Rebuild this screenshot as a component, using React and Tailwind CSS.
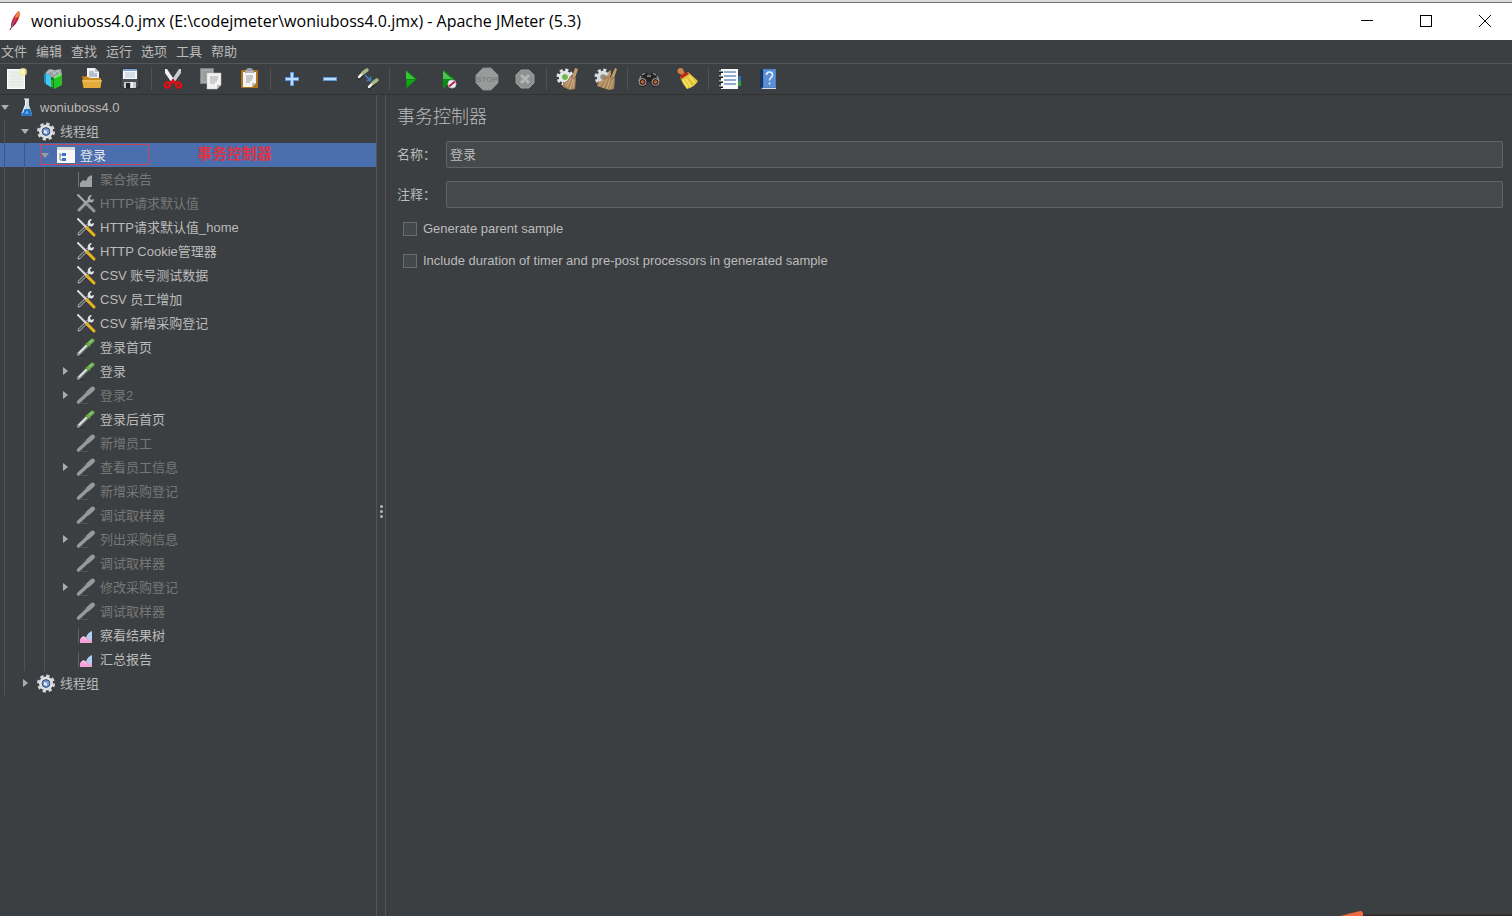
import React, { useState } from 'react';

// Toolbar icons, 24x24
const toolbarIcons = {
  new: (
    <>
      <rect x="3.5" y="2.5" width="17" height="19" fill="#eef0ee" stroke="#fdfdfd" />
      <path d="M6 6h10M6 9h12M6 12h12M6 15h12M6 18h12" stroke="#e0e3e0" />
      <circle cx="19" cy="5" r="4" fill="#f3efa0" opacity="0.8" />
      <circle cx="19" cy="5" r="2" fill="#fbf7b4" />
    </>
  ),
  templates: (
    <>
      <path d="M3 6l4-4 6 1 6-1 1 6-7 4z" fill="#9aa3a6" />
      <path d="M5 6l5-3 2 4M12 7l4-4 2 4" stroke="#c9d0d2" fill="none" />
      <path d="M2 7l3-1v12l-3-3z" fill="#1d8fc4" />
      <path d="M4 6l6 4v11l-6-4z" fill="#49c8ee" />
      <path d="M9 10l4 2v10l-4-1z" fill="#0a7d16" />
      <path d="M12 11l8-3v10l-8 4z" fill="#25c228" />
      <path d="M13 9l5-2 2 1-8 4z" fill="#7bec58" />
      <path d="M10 13v7" stroke="#4fe04d" />
    </>
  ),
  open: (
    <>
      <path d="M2 9h6v12H3z" fill="#a86d12" />
      <path d="M7 1h8l4 4v9H7z" fill="#eef1f6" />
      <path d="M15 1v4h4" fill="#b8c1cf" />
      <path d="M9 5h5M9 7h8M9 9h8" stroke="#7f8da6" />
      <path d="M3 12c0-1 1-2 2-2h3l2 1h11v8c0 2-1 2-2 2H4z" fill="#c98a22" />
      <path d="M2 13h20l-2 8H4z" fill="#e5ac3c" />
      <path d="M3 14h18" stroke="#f3cb73" />
    </>
  ),
  save: (
    <>
      <path d="M3 2h18v19H5l-2-2z" fill="#4a4e53" stroke="#2b2d30" />
      <rect x="5" y="2" width="14" height="10" fill="#f3f6fa" />
      <path d="M5 3h14" stroke="#7ba3d6" strokeWidth="2" />
      <path d="M7 6h10M7 8h10M7 10h10" stroke="#b8c3d3" />
      <rect x="6" y="15" width="12" height="6" fill="#c7cbd0" />
      <rect x="8" y="16" width="4" height="5" fill="#24272a" />
      <path d="M14 15v6" stroke="#eff1f2" strokeWidth="2" />
    </>
  ),
  cut: (
    <>
      <path d="M4 2l2 0 8 12-3 2L4 6z" fill="#f0f1f2" />
      <path d="M20 2l-2 0-8 12 3 2 7-10z" fill="#c9ccd0" />
      <path d="M11 13l3 3M13 13l-3 3" stroke="#dc1015" strokeWidth="3" />
      <ellipse cx="6.5" cy="18" rx="2.2" ry="2.800" fill="none" stroke="#dc1015" strokeWidth="2.600" transform="rotate(35 6.5 18)" />
      <ellipse cx="17.5" cy="18" rx="2.2" ry="2.800" fill="none" stroke="#dc1015" strokeWidth="2.600" transform="rotate(-35 17.5 18)" />
    </>
  ),
  copy: (
    <>
      <rect x="1.5" y="1.5" width="13" height="15" fill="#a5a7a6" stroke="#7f8281" />
      <path d="M4 5h9M4 7h9M4 9h9M4 11h9M4 13h9" stroke="#8e9190" />
      <path d="M8 6h14v12l-4 4H8z" fill="#f1f2f0" stroke="#c4c6c3" strokeWidth="0.5" />
      <path d="M11 10h8M11 12h8M11 14h7M11 16h5" stroke="#a7aaa7" />
      <path d="M18 22v-4h4z" fill="#b6b8b5" />
    </>
  ),
  paste: (
    <>
      <rect x="4" y="3" width="17" height="18" rx="1" fill="#b0731e" />
      <path d="M6 5h13v11l-4 4H6z" fill="#f4f4f2" />
      <path d="M8 4c0-2 2-1 2.500-3h4c.5 2 2.500 1 2.500 3v2H8z" fill="#9b9ea0" />
      <path d="M9 5h7" stroke="#d4d6d7" />
      <path d="M9 9h7M9 11h7M9 13h6M9 15h4" stroke="#999d9d" />
      <path d="M15 20v-4h4z" fill="#bdbfbc" />
    </>
  ),
  expand: (
    <>
      <path d="M12 5v14M5 12h14" stroke="#5f97dd" strokeWidth="4" />
      <path d="M12 6v12M6 12h12" stroke="#bbdcff" strokeWidth="2" />
    </>
  ),
  collapse: (
    <>
      <path d="M5 12h14" stroke="#5f97dd" strokeWidth="4" />
      <path d="M6 12h12" stroke="#bbdcff" strokeWidth="2" />
    </>
  ),
  toggle: (
    <>
      <path d="M2 12l9-9M12 22l9-9" stroke="#282b2c" strokeWidth="4" />
      <path d="M3 10l5-5M13 20l5-5" stroke="#ecefe9" strokeWidth="2.500" strokeLinecap="round" />
      <path d="M7 6l4-3M17 16l4-3" stroke="#a3b98a" strokeWidth="3.500" strokeLinecap="round" />
      <path d="M9 8l5 5M14.500 9.500v4h-4" stroke="#477fc6" strokeWidth="1.500" fill="none" />
    </>
  ),
  start: (
    <>
      <path d="M7 3l11 9-11 10z" fill="#0c8a13" />
      <path d="M7 4l9 8H7z" fill="#37c438" />
      <path d="M8 13h8l-8 7z" fill="#12a51b" />
    </>
  ),
  startNoPauses: (
    <>
      <path d="M6 3l12 9-12 10z" fill="#0c8a13" />
      <path d="M6 4l9 8H6z" fill="#4bc34a" />
      <circle cx="15" cy="17" r="4" fill="#eef0f7" stroke="#c3c7d6" />
      <path d="M12 19.500l6-5" stroke="#c0203c" strokeWidth="2" />
    </>
  ),
  stop: (
    <>
      <path d="M8 1h8l7 7v8l-7 7H8l-7-7V8z" fill="#999b9b" stroke="#868888" />
      <text x="12" y="15" textAnchor="middle" className="font-['Liberation_Sans'] text-[8px] font-bold" fill="#7f8181">STOP</text>
    </>
  ),
  shutdown: (
    <>
      <path d="M8 3h8l5 5v8l-5 5H8l-5-5V8z" fill="#8e9090" stroke="#9c9e9e" />
      <path d="M8 8l8 8M16 8l-8 8" stroke="#b5b7b7" strokeWidth="3" />
    </>
  ),
  clear: (
    <>
      <circle cx="9" cy="10" r="7" fill="none" stroke="#e4e7e7" strokeWidth="3" strokeDasharray="3.100 2.400" />
      <circle cx="9" cy="10" r="4.500" fill="#92b980" stroke="#e4e7e7" strokeWidth="3.500" />
      <circle cx="9" cy="10" r="2.700" fill="#6cb848" />
      <path d="M19 1l3 1-3 9-3-1z" fill="#c29c6c" />
      <path d="M14 9l6 2-1 11-5 1-7-3 0-5c4 0 5-2 7-6z" fill="#a9855d" />
      <path d="M15 11l-4 9M17 12l-3 10M13 14l-4 4M18 13l-1 8" stroke="#cdaf85" />
    </>
  ),
  clearAll: (
    <>
      <circle cx="9" cy="10" r="7" fill="none" stroke="#d8dcdc" strokeWidth="3" strokeDasharray="3.100 2.400" />
      <circle cx="9" cy="10" r="4.500" fill="#8c9390" stroke="#d8dcdc" strokeWidth="3.500" />
      <path d="M15 4l2-1-1 7-3-1zM21 1l2 1-3 9-3-1z" fill="#c29c6c" />
      <path d="M10 8l11 3-1 11-5 1-12-4 1-4c4 0 5-3 6-7z" fill="#a9855d" />
      <path d="M10 13l-5 6M13 12l-4 9M16 12l-3 10M19 13l-3 9" stroke="#cdaf85" />
    </>
  ),
  search: (
    <>
      <path d="M4 8l3-3 3 1 2 3 2-3 3-1 3 3 3 8-3 4h-4l-3-5h-2l-3 5H4l-3-4z" fill="#252527" />
      <path d="M5 8l3-2M19 8l-3-2M4 9l-2 5M20 9l2 5M10 9h4" stroke="#92949a" strokeWidth="1.500" />
      <circle cx="5.500" cy="15" r="3.500" fill="#42251c" stroke="#aaa09d" />
      <circle cx="18.500" cy="15" r="3.500" fill="#42251c" stroke="#aaa09d" />
      <circle cx="5.500" cy="15" r="1.700" fill="#bd653e" />
      <circle cx="18.500" cy="15" r="1.700" fill="#bd653e" />
    </>
  ),
  resetSearch: (
    <>
      <path d="M4 4l4-1 3 5-4 2z" fill="#c9722c" />
      <circle cx="5.500" cy="4" r="3" fill="#d08246" />
      <path d="M5 10l8-5 10 9c-3 5-7 7-11 8-3-3-5-7-7-12z" fill="#e2c33a" />
      <path d="M5 9l7-4 2 2-8 5z" fill="#b8251c" />
      <path d="M8 13l5 8M11 12l5 8M14 9l6 7" stroke="#f7e56c" strokeWidth="1.500" />
    </>
  ),
  functions: (
    <>
      <path d="M20 9h3v5h-3z" fill="#2f6fbb" />
      <path d="M20 14h3v5h-3z" fill="#3b9b43" />
      <path d="M3 2h17v20H3z" fill="#fafbfc" />
      <path d="M6 5h12M6 9h12M6 13h12M6 17h12" stroke="#2e5c9d" />
      <path d="M1 5h4M1 10h4M1 15h4M1 20h4" stroke="#15181b" strokeWidth="2" />
      <path d="M1 4h4M1 9h4M1 14h4M1 19h4" stroke="#f1f2f3" />
    </>
  ),
  help: (
    <>
      <path d="M4 2h3v19l-3 1z" fill="#17375f" />
      <path d="M7 2h13v20H5l2-2z" fill="#4a83cb" />
      <path d="M5 22l2-1h13v1z" fill="#cfdced" />
      <path d="M8 3h11v17H8z" fill="#5a90d2" />
      <path d="M10.500 8c0-4 6-4 6 0 0 3-3 2.500-3 5.500M13.500 15.500v2" stroke="#eaf2fc" strokeWidth="1.500" fill="none" />
    </>
  ),
};

const toolbar = [
  [['new', '新建'], ['templates', '模板'], ['open', '打开'], ['save', '保存']],
  [['cut', '剪切'], ['copy', '复制'], ['paste', '粘贴']],
  [['expand', '展开'], ['collapse', '折叠'], ['toggle', '切换']],
  [['start', '启动'], ['startNoPauses', '不停顿开始'], ['stop', '停止'], ['shutdown', '关闭']],
  [['clear', '清除'], ['clearAll', '清除全部']],
  [['search', '查找'], ['resetSearch', '重置搜索']],
  [['functions', '函数助手'], ['help', '帮助']],
];

const menus = ['文件', '编辑', '查找', '运行', '选项', '工具', '帮助'];

// Tree icons, 20x20
const treeIcons = {
  plan: (
    <>
      <path d="M9 2h4v6l3 9c0 1-1 2-2 2H7c-1 0-2-1-2-2l4-9z" fill="#cbdcea" />
      <path d="M7 12h7l2 5c0 1-1 2-2 2H7c-1 0-2-1-2-2z" fill="#2673c5" />
      <path d="M8 2h5M9.500 3v5l-3 8" stroke="#f7fbff" fill="none" />
      <path d="M11 13l2 4H9z" fill="#5aa9ed" />
    </>
  ),
  threads: (
    <>
      <circle cx="10" cy="10.500" r="7.500" fill="none" stroke="#d3d6d8" strokeWidth="3" strokeDasharray="3.200 2.690" />
      <circle cx="10" cy="10.500" r="5.500" fill="#5b7fae" stroke="#dcdfe1" strokeWidth="3" />
      <circle cx="10" cy="10.500" r="3.800" fill="#7d9fcd" stroke="#2f4a73" />
      <path d="M8 9l3 1v3l-3-1z" fill="#dce7f5" />
    </>
  ),
  controller: (
    <>
      <rect x="1" y="2" width="18" height="16" fill="#f8f8f8" />
      <rect x="1" y="2" width="18" height="3" fill="#d8d9d9" />
      <path d="M4 8v7h3M4 10h3" stroke="#758599" fill="none" />
      <path d="M6 8h4v3H6zM6 13h4v3H6z" fill="#3775c3" />
    </>
  ),
  report: (
    <>
      <path d="M2.500 3v15" stroke="#5d6062" />
      <path d="M4 18v-4l3-3 3 1 2 2 4-2v6z" fill="#f3a3d6" />
      <path d="M10 13c1-4 3-6 6-7v8l-3 1z" fill="#b4cdf0" />
      <path d="M5 14l2-2 3 3" stroke="#fbd8ef" fill="none" />
    </>
  ),
  reportOff: (
    <>
      <path d="M2.500 3v15" stroke="#717375" />
      <path d="M4 18v-4l3-3 3 1 2-4 4-2v12z" fill="#a0a1a2" />
    </>
  ),
  config: (
    <>
      <path d="M3 17l9-9" stroke="#b4b6b9" strokeWidth="3" strokeLinecap="round" />
      <path d="M3 17l9-9" stroke="#45484b" strokeWidth="1.500" />
      <path d="M12 8c-1-4 1-6 4-6l-2 3 1 2 3-1c0 3-2 4-5 3z" fill="#e0e2e4" />
      <path d="M2 2l10 10" stroke="#d9ddcf" strokeWidth="2" strokeLinecap="round" />
      <path d="M11 11l7 7" stroke="#e8b31f" strokeWidth="3" strokeLinecap="round" />
    </>
  ),
  configOff: (
    <>
      <path d="M3 17l9-9" stroke="#999b9c" strokeWidth="3" strokeLinecap="round" />
      <path d="M12 8c-1-4 1-6 4-6l-2 3 1 2 3-1c0 3-2 4-5 3z" fill="#a8aaab" />
      <path d="M2 2l10 10" stroke="#acaeaf" strokeWidth="2" strokeLinecap="round" />
      <path d="M11 11l7 7" stroke="#949697" strokeWidth="3" strokeLinecap="round" />
    </>
  ),
  sampler: (
    <>
      <path d="M3 18.500h6" stroke="#2b2d2e" />
      <path d="M2.500 17l9-9" stroke="#8f9893" strokeWidth="3.500" strokeLinecap="round" />
      <path d="M3 16l8-8" stroke="#eef2ee" strokeWidth="1.500" />
      <path d="M10 6l4 4" stroke="#3f7d2d" strokeWidth="2" />
      <path d="M12.500 7l4-3.500" stroke="#72ad55" strokeWidth="4" strokeLinecap="round" />
      <path d="M13 5.500l3-2.500" stroke="#a5dc85" />
    </>
  ),
  samplerOff: (
    <>
      <path d="M5 18.500h7" stroke="#55585a" />
      <path d="M2.500 17L17 3.500" stroke="#969899" strokeWidth="3.500" strokeLinecap="round" />
      <path d="M12 8l4.500-4" stroke="#969899" strokeWidth="4.500" strokeLinecap="round" />
    </>
  ),
};

const tree = [
  { level: 0, icon: 'plan', label: 'woniuboss4.0', arrow: 'open' },
  { level: 1, icon: 'threads', label: '线程组', arrow: 'open' },
  { level: 2, icon: 'controller', label: '登录', arrow: 'open', note: '事务控制器' },
  { level: 3, icon: 'reportOff', label: '聚合报告', off: true },
  { level: 3, icon: 'configOff', label: 'HTTP请求默认值', off: true },
  { level: 3, icon: 'config', label: 'HTTP请求默认值_home' },
  { level: 3, icon: 'config', label: 'HTTP Cookie管理器' },
  { level: 3, icon: 'config', label: 'CSV 账号测试数据' },
  { level: 3, icon: 'config', label: 'CSV 员工增加' },
  { level: 3, icon: 'config', label: 'CSV 新增采购登记' },
  { level: 3, icon: 'sampler', label: '登录首页' },
  { level: 3, icon: 'sampler', label: '登录', arrow: 'closed' },
  { level: 3, icon: 'samplerOff', label: '登录2', arrow: 'closed', off: true },
  { level: 3, icon: 'sampler', label: '登录后首页' },
  { level: 3, icon: 'samplerOff', label: '新增员工', off: true },
  { level: 3, icon: 'samplerOff', label: '查看员工信息', arrow: 'closed', off: true },
  { level: 3, icon: 'samplerOff', label: '新增采购登记', off: true },
  { level: 3, icon: 'samplerOff', label: '调试取样器', off: true },
  { level: 3, icon: 'samplerOff', label: '列出采购信息', arrow: 'closed', off: true },
  { level: 3, icon: 'samplerOff', label: '调试取样器', off: true },
  { level: 3, icon: 'samplerOff', label: '修改采购登记', arrow: 'closed', off: true },
  { level: 3, icon: 'samplerOff', label: '调试取样器', off: true },
  { level: 3, icon: 'report', label: '察看结果树' },
  { level: 3, icon: 'report', label: '汇总报告' },
  { level: 1, icon: 'threads', label: '线程组', arrow: 'closed' },
];

const TitleBar = () => (
  <header className="flex h-10 shrink-0 border-t-2 border-[#dcdcdc] bg-white text-black">
    <div className="flex flex-1 items-center gap-[47px] border-t border-[#6e6e6e] pr-[21px] pb-px pl-1">
      <div className="flex flex-1 items-center gap-[7px]">
        <svg viewBox="0 0 20 24" className="h-6 w-5" fill="none">
          <path d="M6 21l4-8" stroke="#5a3050" strokeWidth="1" />
          <path d="M7 18c0-6 3-12 8-16 2 4-1 12-7 16z" fill="#c8203a" />
          <path d="M11 8c1-3 2-5 4-6 1 2 0 5-1 7z" fill="#ee7b26" />
          <path d="M7 18c0-3 1-5 2-7l3 3c-1 2-2 3-4 4z" fill="#8d2560" />
          <path d="M8 17l6-13" stroke="#f3aa78" strokeWidth="0.500" />
        </svg>
        <h1 className="font-['Open_Sans','Noto_Sans',sans-serif] text-[16px] font-normal">
          woniuboss4.0.jmx (E:\codejmeter\woniuboss4.0.jmx) - Apache JMeter (5.3)
        </h1>
      </div>
      <button aria-label="最小化">
        <svg viewBox="0 0 12 12" className="h-3 w-3" stroke="#000"><path d="M0 5.500h12" /></svg>
      </button>
      <button aria-label="最大化">
        <svg viewBox="0 0 12 12" className="h-3 w-3" stroke="#000" fill="none"><rect x="0.500" y="0.500" width="11" height="11" /></svg>
      </button>
      <button aria-label="关闭">
        <svg viewBox="0 0 12 12" className="h-3 w-3" stroke="#000"><path d="M0 0l12 12M12 0L0 12" /></svg>
      </button>
    </div>
  </header>
);

const TreeRow = ({ node, selected, onSelect }) => (
  <li
    role="treeitem"
    aria-selected={selected}
    onClick={onSelect}
    className={`relative flex h-6 items-center ${selected ? 'bg-[#4b6eaf]' : ''}`}
  >
    {Array.from({ length: node.level }, (_, i) => (
      <span key={i} className="h-6 w-5 shrink-0 pl-1">
        <span className={`block h-full w-px ${selected ? 'bg-[#3c5581]' : 'bg-[#505355]'}`} />
      </span>
    ))}
    <span className="mr-1.5 flex w-2.5 shrink-0 justify-center">
      {node.arrow && (
        <svg viewBox="0 0 10 10" className="h-2.5 w-2.5" fill={selected ? '#9a9da3' : '#adadad'}>
          <path d={node.arrow === 'open' ? 'M1 3h8L5 8z' : 'M3 1l5 4-5 4z'} />
        </svg>
      )}
    </span>
    <svg viewBox="0 0 20 20" className="mr-1 h-5 w-5 shrink-0" fill="none">{treeIcons[node.icon]}</svg>
    <span className={`pt-px whitespace-nowrap ${node.off ? 'text-[#777777]' : selected ? 'text-[#e4e6ea]' : ''}`}>
      {node.label}
    </span>
    {node.note && (
      <>
        <span className="absolute top-px left-10 h-[21px] w-[109px] border border-[#c8465a]" />
        <span className="absolute top-px left-[197px] text-[15px] leading-5 font-bold text-[#dc3545]">{node.note}</span>
      </>
    )}
  </li>
);

const App = () => {
  const [selected, setSelected] = useState(2);
  const [name, setName] = useState('登录');
  const [comment, setComment] = useState('');

  const inputClass =
    'h-[27px] flex-1 rounded-[2px] border border-[#646464] bg-[#45494a] px-[3px] pb-0.5 text-[13px] text-[#bbbbbb] outline-none';
  const checkClass = 'h-3.5 w-3.5 appearance-none border border-[#6b6b6b] bg-[#43494a] checked:bg-[#4b6eaf]';

  return (
    <div className="relative flex h-screen flex-col overflow-hidden bg-[#3c3f41] font-['Liberation_Sans','Noto_Sans_CJK_SC',sans-serif] text-[13px] leading-5 text-[#bbbbbb]">
      <TitleBar />

      {/* Menu */}
      <nav className="flex h-6 shrink-0 items-center gap-[9px] border-b border-[#555555] pl-px">
        {menus.map((menu) => (
          <button key={menu}>{menu}</button>
        ))}
      </nav>

      {/* Toolbar */}
      <div role="toolbar" className="flex h-[31px] shrink-0 items-center gap-1.5 border-b border-[#323232]">
        {toolbar.map((group, index) => (
          <React.Fragment key={index}>
            {index > 0 && <span className="-mx-px h-[22px] w-px bg-[#515151]" />}
            {group.map(([icon, label]) => (
              <button key={icon} aria-label={label} className="flex w-8 justify-center">
                <svg viewBox="0 0 24 24" className="h-6 w-6" fill="none">{toolbarIcons[icon]}</svg>
              </button>
            ))}
          </React.Fragment>
        ))}
      </div>

      <div className="flex min-h-0 flex-1">
        {/* Test plan tree */}
        <aside className="w-[377px] shrink-0 overflow-hidden border-r border-[#555555]">
          <ul role="tree">
            {tree.map((node, index) => (
              <TreeRow key={index} node={node} selected={selected === index} onSelect={() => setSelected(index)} />
            ))}
          </ul>
        </aside>

        {/* Splitter */}
        <div className="flex w-[9px] shrink-0 flex-col items-center justify-center gap-0.5 border-r border-[#555555] pt-3">
          <span className="h-[3px] w-[3px] rounded-full bg-[#b5b5b5]" />
          <span className="h-[3px] w-[3px] rounded-full bg-[#b5b5b5]" />
          <span className="h-[3px] w-[3px] rounded-full bg-[#b5b5b5]" />
        </div>

        {/* Transaction controller form */}
        <main className="flex min-w-0 flex-1 flex-col pt-2 pr-[9px] pl-[11px]">
          <h2 className="mb-2.5 text-[18px] leading-7 font-light">事务控制器</h2>
          <div className="mb-[13px] flex items-center">
            <label htmlFor="name" className="w-[49px]">名称：</label>
            <input id="name" className={inputClass} value={name} onChange={(e) => setName(e.target.value)} />
          </div>
          <div className="mb-[11px] flex items-center">
            <label htmlFor="comment" className="w-[49px]">注释：</label>
            <input id="comment" className={inputClass} value={comment} onChange={(e) => setComment(e.target.value)} />
          </div>
          <label className="mb-3 flex items-center gap-1.5 pl-1.5">
            <input type="checkbox" className={checkClass} />
            Generate parent sample
          </label>
          <label className="flex items-center gap-1.5 pl-1.5">
            <input type="checkbox" className={checkClass} />
            Include duration of timer and pre-post processors in generated sample
          </label>
        </main>
      </div>

      {/* Edge of the popup coming up from below */}
      <svg viewBox="0 0 172 5" className="absolute right-0 bottom-0 h-[5px] w-[172px]">
        <path d="M23 3.500h149V5H23z" fill="#30292d" />
        <path d="M0 5l20-5c2 0 3 1 3 3v2z" fill="#f26a3d" />
      </svg>
    </div>
  );
};

export default App;
